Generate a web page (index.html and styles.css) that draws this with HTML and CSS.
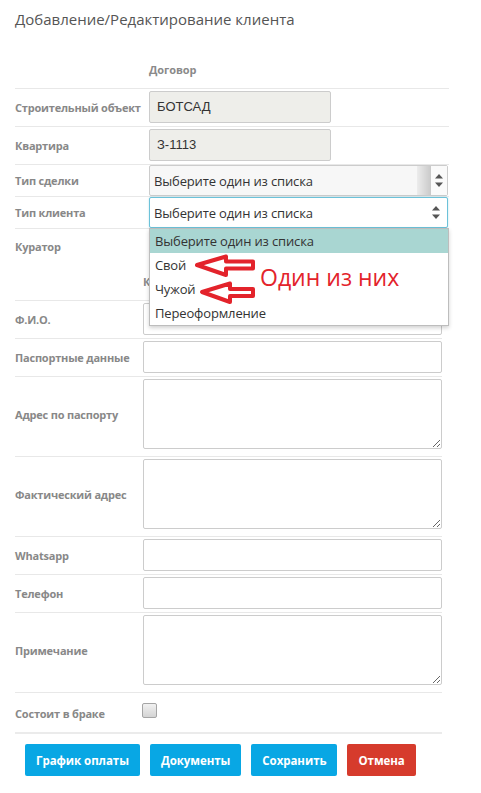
FILE: index.html
```html
<!DOCTYPE html>
<html lang="ru">
<head>
<meta charset="utf-8">
<title>Добавление/Редактирование клиента</title>
<link rel="stylesheet" href="styles.css">
</head>
<body>
<div class="page">
  <h1 class="title">Добавление/Редактирование клиента</h1>

  <section class="sec sec-contract">
    <div class="sec-head"><span></span><span class="sec-title">Договор</span></div>
    <div class="row">
      <label class="lab">Строительный объект</label>
      <div class="ctl"><div class="input ro">БОТСАД</div></div>
    </div>
    <div class="row">
      <label class="lab">Квартира</label>
      <div class="ctl"><div class="input ro">З-1113</div></div>
    </div>
    <div class="row row-sel">
      <label class="lab">Тип сделки</label>
      <div class="ctl">
        <div class="select">
          <span class="sel-text">Выберите один из списка</span>
          <span class="sel-shade"></span>
          <span class="sel-arrows"><svg width="8" height="13" viewBox="0 0 8 13"><polygon points="4,0 8,4.5 0,4.5" fill="#555"/><polygon points="0,8.5 8,8.5 4,13" fill="#555"/></svg></span>
        </div>
      </div>
    </div>
    <div class="row row-sel">
      <label class="lab">Тип клиента</label>
      <div class="ctl">
        <div class="select focus">
          <span class="sel-text">Выберите один из списка</span>
          <span class="sel-arrows"><svg width="8" height="13" viewBox="0 0 8 13"><polygon points="4,0 8,4.5 0,4.5" fill="#555"/><polygon points="0,8.5 8,8.5 4,13" fill="#555"/></svg></span>
        </div>
        <ul class="dd">
          <li class="opt active">Выберите один из списка</li>
          <li class="opt">Свой</li>
          <li class="opt">Чужой</li>
          <li class="opt">Переоформление</li>
        </ul>
      </div>
    </div>
    <div class="row row-cur">
      <label class="lab">Куратор</label>
      <div class="ctl">
        <div class="select">
          <span class="sel-text">Выберите один из списка</span>
        </div>
      </div>
    </div>
  </section>

  <section class="sec sec-client">
    <div class="sec-head"><span></span><span class="sec-title">Клиент</span></div>
    <div class="row">
      <label class="lab">Ф.И.О.</label>
      <div class="ctl"><input class="input" type="text"></div>
    </div>
    <div class="row">
      <label class="lab">Паспортные данные</label>
      <div class="ctl"><input class="input" type="text"></div>
    </div>
    <div class="row row-ta">
      <label class="lab">Адрес по паспорту</label>
      <div class="ctl"><textarea class="ta"></textarea></div>
    </div>
    <div class="row row-ta">
      <label class="lab">Фактический адрес</label>
      <div class="ctl"><textarea class="ta"></textarea></div>
    </div>
    <div class="row">
      <label class="lab">Whatsapp</label>
      <div class="ctl"><input class="input" type="text"></div>
    </div>
    <div class="row">
      <label class="lab">Телефон</label>
      <div class="ctl"><input class="input" type="text"></div>
    </div>
    <div class="row row-ta">
      <label class="lab">Примечание</label>
      <div class="ctl"><textarea class="ta"></textarea></div>
    </div>
    <div class="row row-chk">
      <label class="lab">Состоит в браке</label>
      <div class="ctl"><input class="chk" type="checkbox"></div>
    </div>
  </section>

  <div class="actions">
    <button class="btn blue">График оплаты</button>
    <button class="btn blue">Документы</button>
    <button class="btn blue">Сохранить</button>
    <button class="btn red">Отмена</button>
  </div>

  <div class="annot">
    <svg class="arrows" width="64" height="56" viewBox="0 0 64 56">
      <path d="M2 13 L31 4.5 L31 9.5 L58 9.5 L58 16.5 L31 16.5 L31 23 Z" fill="#fff" stroke="#e3232b" stroke-width="4" stroke-linejoin="round"/>
      <path d="M7 40 L35 31.5 L35 37 L58 37 L58 44 L35 44 L35 50 Z" fill="#fff" stroke="#e3232b" stroke-width="4" stroke-linejoin="round"/>
    </svg>
    <span class="annot-text">Один из них</span>
  </div>
</div>
</body>
</html>
```

FILE: styles.css
```css
* { box-sizing: border-box; }

body {
  margin: 0;
  background: #fff;
  font-family: "Open Sans", "Liberation Sans", sans-serif;
  color: #333;
}

.page {
  position: relative;
  padding-left: 15px;
  width: 481px;
  height: 793px;
  overflow: hidden;
}

.title {
  margin: 0;
  height: 50px;
  padding-top: 8px;
  font-size: 15px;
  line-height: 22px;
  font-weight: 400;
  color: #555;
}

.sec { display: flex; flex-direction: column; }
.sec-contract { width: 434px; --lab: 134px; }
.sec-client { width: 427px; --lab: 128px; }

.sec-head {
  display: grid;
  grid-template-columns: var(--lab) 1fr;
  align-items: center;
  height: 38px;
}
.sec-title {
  font-size: 11px;
  font-weight: 700;
  letter-spacing: -0.1px;
  color: #8a8a8a;
}

.row {
  display: grid;
  grid-template-columns: var(--lab) 1fr;
  align-items: center;
  border-top: 1px solid #e8e8e8;
  padding: 2px 0 3px;
}
.row-sel { padding: 0; }
.row-cur { padding: 2px 0 0; }
.row-ta { padding: 2px 0 7px; }
.row-chk { height: 40px; padding: 0; align-items: start; }
.row-chk .lab { align-self: center; padding-top: 2px; }

.lab {
  font-size: 11px;
  font-weight: 700;
  letter-spacing: -0.2px;
  color: #888;
  white-space: nowrap;
}

.ctl { position: relative; }

.input {
  display: block;
  width: 100%;
  height: 32px;
  margin: 0;
  border: 1px solid #ccc;
  border-radius: 2px;
  background: #fff;
  font-family: "Liberation Sans", Arial, sans-serif;
  font-size: 13px;
  color: #333;
  padding: 0 8px;
  outline: none;
}
.input.ro {
  width: 182px;
  background: #eeeeea;
  line-height: 30px;
  padding-left: 7px;
}

.select {
  display: flex;
  align-items: stretch;
  height: 31px;
  border: 1px solid #ccc;
  border-radius: 2px;
  background: #f7f7f7;
  width: 299px;
}
.sel-text {
  flex: 1;
  display: flex;
  align-items: center;
  padding-left: 4px;
  font-size: 13px;
  letter-spacing: -0.15px;
  color: #333;
  white-space: nowrap;
}
.sel-shade {
  width: 14px;
  background: linear-gradient(to right, #ececec, #c9c9c9);
}
.sel-arrows {
  width: 16px;
  display: flex;
  align-items: center;
  justify-content: center;
  background: #fafafa;
}
.select.focus {
  border-color: #6cc2d9;
  background: #fff;
  box-shadow: 0 0 2px rgba(108, 194, 217, 0.5);
}
.select.focus .sel-arrows { background: #fff; margin-right: 3px; }

.dd {
  position: absolute;
  top: 100%;
  left: 0;
  width: 300px;
  margin: 0;
  padding: 0;
  list-style: none;
  background: #fff;
  border: 1px solid #bdbdbd;
  box-shadow: 0 2px 4px rgba(0, 0, 0, 0.18);
  z-index: 5;
}
.opt {
  height: 24px;
  line-height: 24px;
  padding-left: 5px;
  font-size: 13px;
  letter-spacing: -0.15px;
  color: #333;
}
.opt.active { background: #a9d6d2; }

.ta {
  display: block;
  width: 100%;
  height: 70px;
  margin: 0;
  border: 1px solid #ccc;
  border-radius: 2px;
  background: #fff;
  resize: both;
  outline: none;
}

.chk {
  appearance: none;
  -webkit-appearance: none;
  display: block;
  width: 15px;
  height: 15px;
  margin: 10px 0 0 -1px;
  border: 1px solid #a5a5a5;
  border-radius: 2px;
  background: linear-gradient(#f1f1f1, #d4d4d4);
}

.actions {
  width: 427px;
  border-top: 2px solid #ebebeb;
  padding: 10px 0 0 10px;
  display: flex;
  gap: 10px;
}
.btn {
  height: 32px;
  padding: 0 11px;
  border: 0;
  border-radius: 2px;
  font-family: "Open Sans", "Liberation Sans", sans-serif;
  font-size: 11.5px;
  font-weight: 700;
  color: #fff;
  letter-spacing: -0.05px;
}
.btn.blue { background: #08a7e4; }
.btn.red { background: #d63b2c; }

.annot {
  position: absolute;
  left: 195px;
  top: 252px;
  width: 210px;
  height: 56px;
  z-index: 10;
}
.arrows { position: absolute; left: 0; top: 0; }
.annot-text {
  position: absolute;
  left: 65px;
  top: 8.5px;
  font-size: 23px;
  line-height: normal;
  color: #e3232b;
  white-space: nowrap;
}
```
